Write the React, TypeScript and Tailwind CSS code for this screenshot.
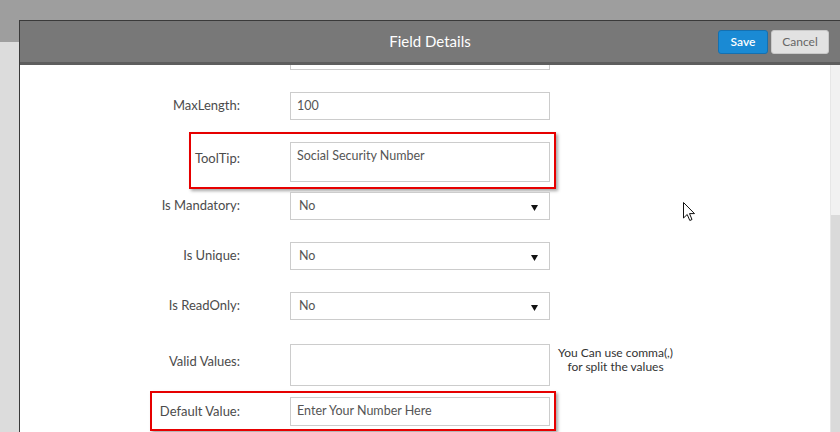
import React from 'react';

const font = { fontFamily: 'Lato, "Liberation Sans", sans-serif' };

const Arrow = () => (
    <svg width="7" height="6" viewBox="0 0 7 6" className="absolute right-[11px] top-[12px]">
        <polygon points="0,0 7,0 3.5,6" fill="#111" />
    </svg>
);

const Label: React.FC<{ text: string; className?: string }> = ({ text, className }) => (
    <div className={`w-[220px] shrink-0 text-right text-[13px] text-[#4b4b4b] ${className || ''}`}>{text}</div>
);

const Select: React.FC<{ value: string }> = ({ value }) => (
    <div className="relative ml-[50px] flex h-[28px] w-[260px] items-center border border-[#cccccc] bg-white pl-[8px] text-[12.5px] text-[#555]">
        {value}
        <Arrow />
    </div>
);

const App: React.FC = () => {
    return (
        <div
            className="relative flex h-[432px] w-[840px] flex-col overflow-hidden bg-[linear-gradient(#9e9e9e_42px,#dcdcdc_42px)] pl-[19px] pt-[20px]"
            style={font}
        >
            <div className="flex flex-1 flex-col border-l border-t border-[#3a3a3a] bg-white">
                {/* header */}
                <div className="relative flex h-[41px] shrink-0 items-center justify-center bg-[#787878]">
                    <span className="text-[15px] text-white">Field Details</span>
                    <div className="absolute right-[11px] top-[9px] flex gap-[3px]">
                        <button className="h-[24px] w-[50px] rounded-[3px] border border-[#1570b0] bg-[#1a8ad4] text-[12px] font-semibold text-white">
                            Save
                        </button>
                        <button className="h-[24px] w-[58px] rounded-[3px] border border-[#c9c9c9] bg-[#e2e2e2] text-[12px] text-[#666]">
                            Cancel
                        </button>
                    </div>
                </div>
                <div className="h-[3px] shrink-0 bg-[#5e5e5e]" />

                {/* body */}
                <div className="flex flex-1 overflow-hidden">
                    <div className="flex-1 overflow-hidden">
                        <div className="-mt-[23px] flex flex-col">
                            <div className="flex h-[28px] items-center">
                                <Label text="" />
                                <div className="ml-[50px] h-[28px] w-[260px] border border-[#cccccc]" />
                            </div>

                            <div className="mt-[22px] flex h-[28px] items-center">
                                <Label text="MaxLength:" />
                                <div className="ml-[50px] flex h-[28px] w-[260px] items-center border border-[#cccccc] pl-[6px] text-[12.5px] text-[#555]">
                                    100
                                </div>
                            </div>

                            <div className="relative mt-[22px] flex h-[40px] items-center">
                                <Label text="ToolTip:" className="-mt-[6px]" />
                                <div className="ml-[50px] h-[40px] w-[260px] border border-[#cccccc] pl-[6px] pt-[4px] text-[12.5px] text-[#555]">
                                    Social Security Number
                                </div>
                                <div className="absolute bottom-[-7px] left-[169px] top-[-10px] w-[367px] border-2 border-[#e60000] shadow-[2px_2px_3px_rgba(0,0,0,0.35)]" />
                            </div>

                            <div className="mt-[10px] flex h-[28px] items-center">
                                <Label text="Is Mandatory:" />
                                <Select value="No" />
                            </div>

                            <div className="mt-[22px] flex h-[28px] items-center">
                                <Label text="Is Unique:" />
                                <Select value="No" />
                            </div>

                            <div className="mt-[22px] flex h-[28px] items-center">
                                <Label text="Is ReadOnly:" />
                                <Select value="No" />
                            </div>

                            <div className="mt-[24px] flex h-[42px] items-start">
                                <Label text="Valid Values:" className="pt-[8px]" />
                                <div className="ml-[50px] h-[42px] w-[260px] border border-[#cccccc]" />
                                <div className="ml-[8px] pt-[2px] text-center text-[12px] leading-[14px] text-[#333]">
                                    You Can use comma(,)
                                    <br />
                                    for split the values
                                </div>
                            </div>

                            <div className="relative mt-[11px] flex h-[29px] items-center">
                                <Label text="Default Value:" />
                                <div className="ml-[50px] flex h-[29px] w-[260px] items-center border border-[#cccccc] pl-[6px] text-[12.5px] text-[#555]">
                                    Enter Your Number Here
                                </div>
                                <div className="absolute bottom-[-5px] left-[130px] top-[-6px] w-[406px] border-2 border-[#e60000] shadow-[2px_2px_3px_rgba(0,0,0,0.35)]" />
                            </div>
                        </div>
                    </div>

                    {/* scrollbar */}
                    <div className="flex w-[10px] shrink-0 flex-col border-l border-[#e6e6e6] bg-[#f1f1f1] pt-[150px]">
                        <div className="flex-1 bg-[#dadada]" />
                    </div>
                </div>
            </div>

            {/* mouse pointer */}
            <svg width="13" height="20" viewBox="0 0 13 20" className="absolute left-[683px] top-[202px]">
                <path d="M0.5 0.5 L0.5 16 L4.2 12.5 L6.8 18.5 L9 17.5 L6.5 11.6 L11.5 11.6 Z" fill="white" stroke="#111" strokeWidth="1" />
            </svg>
        </div>
    );
};

export default App;
